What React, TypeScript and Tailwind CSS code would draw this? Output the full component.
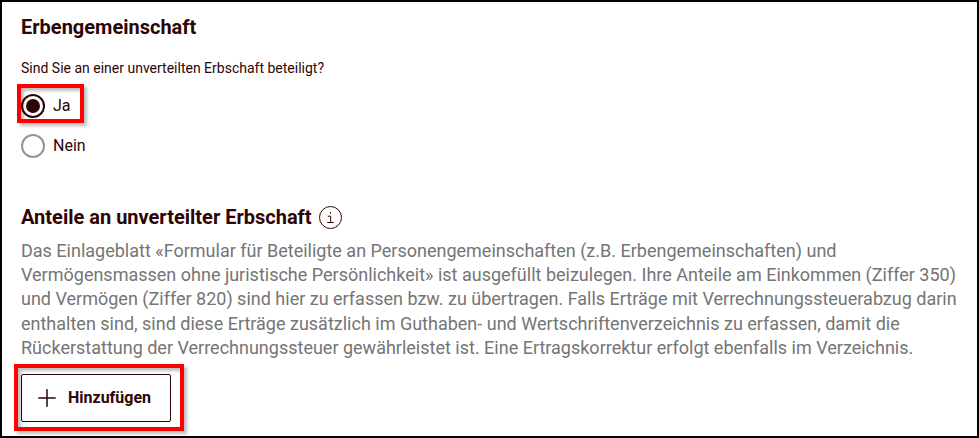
import { Plus } from 'lucide-react'

const INK = 'text-[#2d0505]'

function Marked({ className, children }: { className: string; children: React.ReactNode }) {
  return (
    <div className="relative">
      {children}
      <div className={`pointer-events-none absolute border-[4px] border-[#ff0000] shadow-[3px_3px_3px_rgba(0,0,0,0.25),inset_3px_3px_3px_rgba(0,0,0,0.25)] ${className}`} />
    </div>
  )
}

function Radio({ label, checked }: { label: string; checked?: boolean }) {
  return (
    <label className="flex h-6 items-center gap-[8px]">
      <span
        className={`flex h-6 w-6 items-center justify-center rounded-full border-2 ${
          checked ? 'border-[#2d0505]' : 'border-[#949494]'
        }`}
      >
        {checked && <span className="h-[14px] w-[14px] rounded-full bg-[#2d0505]" />}
      </span>
      <span className={`text-base ${INK}`}>{label}</span>
    </label>
  )
}

export default function App() {
  return (
    <div className="h-[438px] w-[979px] overflow-hidden bg-white font-['Roboto',sans-serif]">
      <div className="h-[438px] w-[979px] border-2 border-black pl-[19px] pt-[13px]">
        <h2 className={`text-[20px] leading-[24px] font-bold ${INK}`}>Erbengemeinschaft</h2>
        <p className={`mt-[19px] text-sm leading-[20px] ${INK}`}>Sind Sie an einer unverteilten Erbschaft beteiligt?</p>

        <div className="mt-[16px] flex w-fit flex-col gap-[16px]">
          <Marked className="-top-[10px] right-[2px] -bottom-[5px] -left-[4px]">
            <Radio label="Ja" checked />
          </Marked>
          <Radio label="Nein" />
        </div>

        <div className="mt-[47px] flex items-center gap-[7px]">
          <h3 className={`text-[20px] leading-[24px] font-bold ${INK}`}>Anteile an unverteilter Erbschaft</h3>
          <span className="flex h-[23px] w-[23px] items-center justify-center rounded-full border border-[#2d0505]">
            <svg width="9" height="13" viewBox="0 0 9 13" fill="none" stroke="#2d0505" strokeWidth="1">
              <path d="M4.5 1v1.6M1.8 5.2h2.9v6M1.2 11.5h6.6" />
            </svg>
          </span>
        </div>

        <p className="mt-[10px] w-[945px] text-[18px] leading-[24.2px] text-[#757575]">
          Das Einlageblatt «Formular für Beteiligte an Personengemeinschaften (z.B. Erbengemeinschaften) und
          <br />
          Vermögensmassen ohne juristische Persönlichkeit» ist ausgefüllt beizulegen. Ihre Anteile am Einkommen (Ziffer 350)
          <br />
          und Vermögen (Ziffer 820) sind hier zu erfassen bzw. zu übertragen. Falls Erträge mit Verrechnungssteuerabzug darin
          <br />
          enthalten sind, sind diese Erträge zusätzlich im Guthaben- und Wertschriftenverzeichnis zu erfassen, damit die
          <br />
          Rückerstattung der Verrechnungssteuer gewährleistet ist. Eine Ertragskorrektur erfolgt ebenfalls im Verzeichnis.
        </p>

        <div className="mt-[14px] w-fit">
          <Marked className="-top-[10px] -right-[13px] -bottom-[9px] -left-[7px]">
            <button className={`flex h-[48px] w-[150px] items-center gap-[7px] rounded-[2px] border border-[#2d0505] bg-white pl-[11px] text-base font-bold ${INK}`}>
              <Plus size={28} strokeWidth={1.3} />
              Hinzufügen
            </button>
          </Marked>
        </div>
      </div>
    </div>
  )
}
